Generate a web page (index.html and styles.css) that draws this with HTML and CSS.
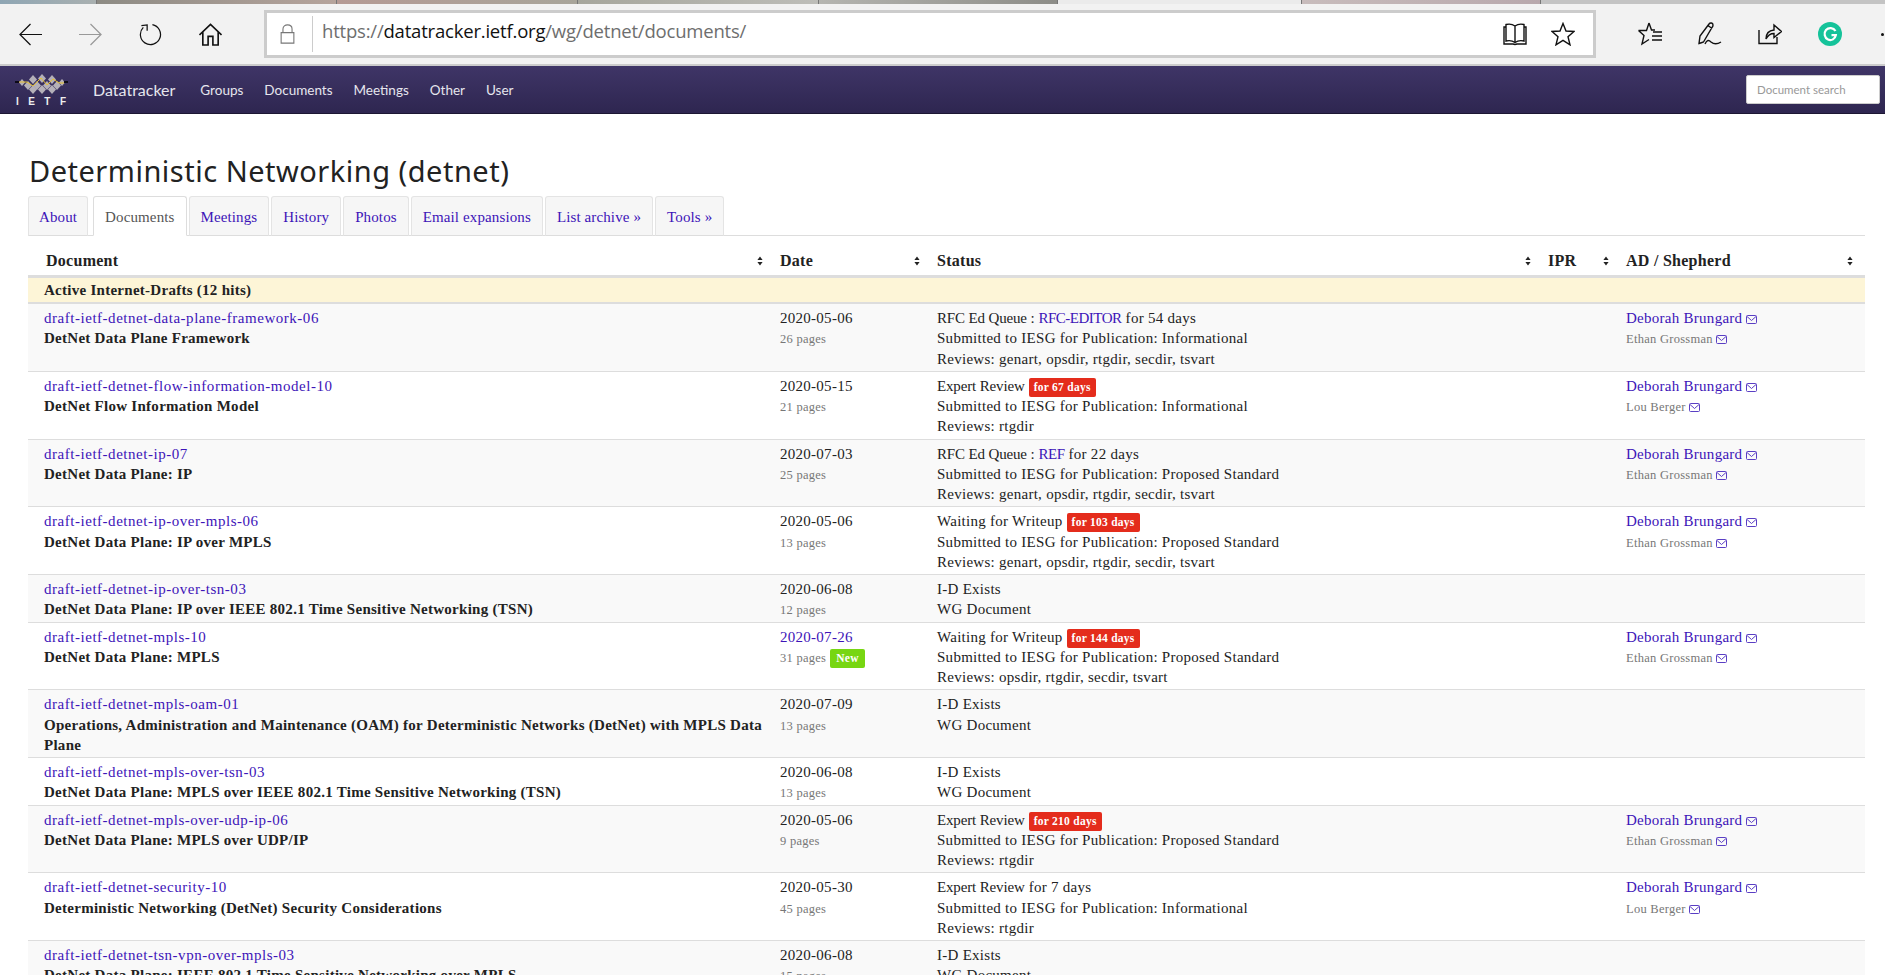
FILE: index.html
```html
<!DOCTYPE html>
<html lang="en">
<head>
<meta charset="utf-8">
<title>Deterministic Networking (detnet)</title>
<link rel="stylesheet" href="styles.css">
</head>
<body>
<svg class="defs" width="0" height="0" aria-hidden="true">
  <symbol id="sort" viewBox="0 0 6 10"><path d="M3 0.5 L5.6 4 H0.4 Z M3 9.5 L5.6 6 H0.4 Z"/></symbol>
  <symbol id="mail" viewBox="0 0 11 9"><rect x="0.5" y="0.5" width="10" height="8" rx="1" fill="none" stroke="currentColor"/><path d="M1 1.5 L5.5 5.5 L10 1.5" fill="none" stroke="currentColor"/></symbol>
</svg>
<div class="photo-strip">
  <span class="strip s1"></span><span class="strip s2"></span><span class="strip s3"></span><span class="strip s4"></span><span class="strip s5"></span><span class="strip s6"></span><span class="strip s7"></span><span class="strip s8"></span>
</div>
<header class="toolbar">
  <div class="tool-left">
    <svg class="tool-icon" viewBox="0 0 24 24"><path d="M1 12 H24 M12 1 L1 12 L12 23" /></svg>
    <svg class="tool-icon off" viewBox="0 0 24 24"><path d="M0 12 H23 M12 1 L23 12 L12 23" /></svg>
    <svg class="tool-icon" viewBox="0 0 24 24"><path d="M14 1.700 A10.500 10.500 0 1 1 4.500 4.600 M2.500 2.700 L8.500 2 V8" /></svg>
    <svg class="tool-icon home" viewBox="0 0 24 24"><path d="M0.500 12.500 L12 1.500 L23.500 12.500 M4 9.500 V23 H9.500 V14 H14.500 V23 H20 V9.500" /></svg>
  </div>
  <div class="address">
    <svg class="lock" viewBox="0 0 16 22"><path d="M1 9.500 H15 V21 H1 Z M3 9.500 V5.500 C3 -0.500 13 -0.500 13 5.500 V9.500" /></svg>
    <span class="addr-sep"></span>
    <span class="url">https://<b>datatracker.ietf.org</b>/wg/detnet/documents/</span>
    <span class="addr-right">
      <svg class="tool-icon book" viewBox="0 0 24 22"><path d="M12 3 C9 0.800 6 0.800 3 1.500 V18 C6 17.300 9 17.300 12 19.500 C15 17.300 18 17.300 21 18 V1.500 C18 0.800 15 0.800 12 3 Z M12 3 V19.500 M3 4 H1 V21 H10 L12 21.500 L14 21 H23 V4 H21" /></svg>
      <svg class="tool-icon star" viewBox="0 0 24 24"><path d="M12 1.500 L15 9 L23 9.500 L17 14.700 L19 22.800 L12 18.300 L5 22.800 L7 14.700 L1 9.500 L9 9 Z" /></svg>
    </span>
  </div>
  <div class="tool-right">
    <svg class="tool-icon" viewBox="0 0 24 24"><path d="M11 1 L13.500 8 H17 M0.500 8.500 H8.500 L11 1 M0.500 8.500 L6 13.500 L4 22 L11 17.500 M15 10 H24 M14 14 H24 M14 18 H24" /></svg>
    <svg class="tool-icon" viewBox="0 0 24 24"><path d="M1 21.500 L2 14 L11 2 C12 0.500 15 0.500 15 3 C15 4 14.500 5 14 5.500 L5.500 20 Z M10 3.500 L14 6.500 M1 21.500 L5.500 20 M7 22 C9 17.500 11 18 13 20 C16 22.500 19 22.500 23 20" /></svg>
    <svg class="tool-icon" viewBox="0 0 24 24"><path d="M1 8 V21.500 H19 V15 M8 17 C8 11 11 8.500 16 8 V3 L23.500 9.500 L16 15.500 V11.500 C12.500 11.500 10 13 8 17 Z" /></svg>
    <svg class="grammarly" viewBox="0 0 24 24"><circle cx="12" cy="12" r="12" fill="#15c39a"/><path d="M17.500 9 C15.500 5.500 10.500 5.300 8 8 C5.500 11 6.500 16 10 17.500 C13.500 19 17 17 17.800 13.200 H13.500" fill="none" stroke="#fff" stroke-width="2.200"/></svg>
    <span class="more-dot"></span>
  </div>
</header>
<nav class="navbar">
  <a class="brand-logo" href="#">
    <svg class="logo-mark" viewBox="0 0 54 21">
      <g fill="#b4b0b8">
        <path d="M19 2 L23 6.500 L19 11 L15 6.500 Z"/><path d="M28 1 L32 5.500 L28 10 L24 5.500 Z"/><path d="M38 2 L42 6.500 L38 11 L34 6.500 Z"/>
        <path d="M14 8 L18 12.500 L14 17 L10 12.500 Z"/><path d="M23 8 L27 12.500 L23 17 L19 12.500 Z"/><path d="M33 8 L37 12.500 L33 17 L29 12.500 Z"/><path d="M43 8 L47 12.500 L43 17 L39 12.500 Z"/>
        <path d="M19 12 L23 16.500 L19 21 L15 16.500 Z"/><path d="M28 12 L32 16.500 L28 21 L24 16.500 Z"/><path d="M38 12 L42 16.500 L38 21 L34 16.500 Z"/>
        <path d="M8 6 L11 9.500 L8 13 L5 9.500 Z"/><path d="M48 6 L51 9.500 L48 13 L45 9.500 Z"/>
      </g>
      <path d="M5 9 H13 L19 13 L27 5 L33 12 L39 6 L45 10 H50" fill="none" stroke="#e6c02e" stroke-width="1"/>
      <path d="M1 9 H5 M50 9 H54" fill="none" stroke="#0d0a18" stroke-width="2"/>
    </svg>
    <span class="logo-text">IETF</span>
  </a>
  <a class="brand" href="#">Datatracker</a>
  <ul class="nav-links">
    <li><a href="#">Groups</a></li>
    <li><a href="#">Documents</a></li>
    <li><a href="#">Meetings</a></li>
    <li><a href="#">Other</a></li>
    <li><a href="#">User</a></li>
  </ul>
  <input class="doc-search" type="text" placeholder="Document search">
</nav>
<main class="page">
  <h1 class="title">Deterministic Networking (detnet)</h1>
  <ul class="tabs">
    <li><a href="#">About</a></li>
    <li class="active"><a href="#">Documents</a></li>
    <li><a href="#">Meetings</a></li>
    <li><a href="#">History</a></li>
    <li><a href="#">Photos</a></li>
    <li><a href="#">Email expansions</a></li>
    <li><a href="#">List archive »</a></li>
    <li><a href="#">Tools »</a></li>
  </ul>
  <table class="docs">
    <colgroup><col class="c-doc"><col class="c-date"><col class="c-status"><col class="c-ipr"><col class="c-ad"></colgroup>
    <thead>
      <tr>
        <th class="first"><div class="th-in">Document<svg class="sort"><use href="#sort"/></svg></div></th>
        <th><div class="th-in">Date<svg class="sort"><use href="#sort"/></svg></div></th>
        <th><div class="th-in">Status<svg class="sort"><use href="#sort"/></svg></div></th>
        <th><div class="th-in">IPR<svg class="sort"><use href="#sort"/></svg></div></th>
        <th><div class="th-in">AD / Shepherd<svg class="sort"><use href="#sort"/></svg></div></th>
      </tr>
    </thead>
    <tbody>
      <tr class="group"><th colspan="5" class="first">Active Internet-Drafts (12 hits)</th></tr>
      <tr>
        <td class="first"><a href="#">draft-ietf-detnet-data-plane-framework-06</a><br><b>DetNet Data Plane Framework</b></td>
        <td>2020-05-06<br><small>26 pages</small></td>
        <td><span class="tight">RFC Ed Queue :</span> <a class="caps" href="#">RFC-EDITOR</a> for 54 days<br>Submitted to IESG for Publication: Informational<br>Reviews: genart, opsdir, rtgdir, secdir, tsvart</td>
        <td></td>
        <td><a href="#">Deborah Brungard</a> <a href="#"><svg class="mail"><use href="#mail"/></svg></a><br><small>Ethan Grossman <a href="#"><svg class="mail"><use href="#mail"/></svg></a></small></td>
      </tr>
      <tr>
        <td class="first"><a href="#">draft-ietf-detnet-flow-information-model-10</a><br><b>DetNet Flow Information Model</b></td>
        <td>2020-05-15<br><small>21 pages</small></td>
        <td><span class="tight">Expert Review</span> <span class="badge red">for 67 days</span><br>Submitted to IESG for Publication: Informational<br>Reviews: rtgdir</td>
        <td></td>
        <td><a href="#">Deborah Brungard</a> <a href="#"><svg class="mail"><use href="#mail"/></svg></a><br><small>Lou Berger <a href="#"><svg class="mail"><use href="#mail"/></svg></a></small></td>
      </tr>
      <tr>
        <td class="first"><a href="#">draft-ietf-detnet-ip-07</a><br><b>DetNet Data Plane: IP</b></td>
        <td>2020-07-03<br><small>25 pages</small></td>
        <td><span class="tight">RFC Ed Queue :</span> <a class="caps" href="#">REF</a> for 22 days<br>Submitted to IESG for Publication: Proposed Standard<br>Reviews: genart, opsdir, rtgdir, secdir, tsvart</td>
        <td></td>
        <td><a href="#">Deborah Brungard</a> <a href="#"><svg class="mail"><use href="#mail"/></svg></a><br><small>Ethan Grossman <a href="#"><svg class="mail"><use href="#mail"/></svg></a></small></td>
      </tr>
      <tr>
        <td class="first"><a href="#">draft-ietf-detnet-ip-over-mpls-06</a><br><b>DetNet Data Plane: IP over MPLS</b></td>
        <td>2020-05-06<br><small>13 pages</small></td>
        <td>Waiting for Writeup <span class="badge red">for 103 days</span><br>Submitted to IESG for Publication: Proposed Standard<br>Reviews: genart, opsdir, rtgdir, secdir, tsvart</td>
        <td></td>
        <td><a href="#">Deborah Brungard</a> <a href="#"><svg class="mail"><use href="#mail"/></svg></a><br><small>Ethan Grossman <a href="#"><svg class="mail"><use href="#mail"/></svg></a></small></td>
      </tr>
      <tr>
        <td class="first"><a href="#">draft-ietf-detnet-ip-over-tsn-03</a><br><b>DetNet Data Plane: IP over IEEE 802.1 Time Sensitive Networking (TSN)</b></td>
        <td>2020-06-08<br><small>12 pages</small></td>
        <td>I-D Exists<br>WG Document</td>
        <td></td>
        <td></td>
      </tr>
      <tr>
        <td class="first"><a href="#">draft-ietf-detnet-mpls-10</a><br><b>DetNet Data Plane: MPLS</b></td>
        <td><a href="#">2020-07-26</a><br><small>31 pages</small> <span class="badge green">New</span></td>
        <td>Waiting for Writeup <span class="badge red">for 144 days</span><br>Submitted to IESG for Publication: Proposed Standard<br>Reviews: opsdir, rtgdir, secdir, tsvart</td>
        <td></td>
        <td><a href="#">Deborah Brungard</a> <a href="#"><svg class="mail"><use href="#mail"/></svg></a><br><small>Ethan Grossman <a href="#"><svg class="mail"><use href="#mail"/></svg></a></small></td>
      </tr>
      <tr>
        <td class="first"><a href="#">draft-ietf-detnet-mpls-oam-01</a><br><b>Operations, Administration and Maintenance (OAM) for Deterministic Networks (DetNet) with MPLS Data Plane</b></td>
        <td>2020-07-09<br><small>13 pages</small></td>
        <td>I-D Exists<br>WG Document</td>
        <td></td>
        <td></td>
      </tr>
      <tr>
        <td class="first"><a href="#">draft-ietf-detnet-mpls-over-tsn-03</a><br><b>DetNet Data Plane: MPLS over IEEE 802.1 Time Sensitive Networking (TSN)</b></td>
        <td>2020-06-08<br><small>13 pages</small></td>
        <td>I-D Exists<br>WG Document</td>
        <td></td>
        <td></td>
      </tr>
      <tr>
        <td class="first"><a href="#">draft-ietf-detnet-mpls-over-udp-ip-06</a><br><b>DetNet Data Plane: MPLS over UDP/IP</b></td>
        <td>2020-05-06<br><small>9 pages</small></td>
        <td><span class="tight">Expert Review</span> <span class="badge red">for 210 days</span><br>Submitted to IESG for Publication: Proposed Standard<br>Reviews: rtgdir</td>
        <td></td>
        <td><a href="#">Deborah Brungard</a> <a href="#"><svg class="mail"><use href="#mail"/></svg></a><br><small>Ethan Grossman <a href="#"><svg class="mail"><use href="#mail"/></svg></a></small></td>
      </tr>
      <tr>
        <td class="first"><a href="#">draft-ietf-detnet-security-10</a><br><b>Deterministic Networking (DetNet) Security Considerations</b></td>
        <td>2020-05-30<br><small>45 pages</small></td>
        <td><span class="tight">Expert Review</span> for 7 days<br>Submitted to IESG for Publication: Informational<br>Reviews: rtgdir</td>
        <td></td>
        <td><a href="#">Deborah Brungard</a> <a href="#"><svg class="mail"><use href="#mail"/></svg></a><br><small>Lou Berger <a href="#"><svg class="mail"><use href="#mail"/></svg></a></small></td>
      </tr>
      <tr>
        <td class="first"><a href="#">draft-ietf-detnet-tsn-vpn-over-mpls-03</a><br><b>DetNet Data Plane: IEEE 802.1 Time Sensitive Networking over MPLS</b></td>
        <td>2020-06-08<br><small>15 pages</small></td>
        <td>I-D Exists<br>WG Document</td>
        <td></td>
        <td></td>
      </tr>
    </tbody>
  </table>
</main>
</body>
</html>
```
FILE: styles.css
```css
* { box-sizing: border-box; }
html, body { margin: 0; height: 975px; overflow: hidden; background: #fff; }
body { font-family: "Liberation Serif", serif; font-size: 15px; color: #222; letter-spacing: 0.27px; }
a { color: #3d14b8; text-decoration: none; }
.defs { position: absolute; }

.photo-strip { display: flex; height: 4px; }
.strip { border-right: 1px solid #777; }
.s1 { width: 97px; background: linear-gradient(90deg, #8fa6b4, #a9b0b0); }
.s2 { width: 240px; background: linear-gradient(90deg, #8d8b84, #b6a49c); }
.s3 { width: 241px; background: linear-gradient(90deg, #b59a94, #a8a59a); }
.s4 { width: 241px; background: linear-gradient(90deg, #a6a69c, #bdbdb8); }
.s5 { width: 239px; background: linear-gradient(90deg, #b5b5b0, #8d8d88); }
.s6 { width: 244px; background: #ebebeb; }
.s7 { width: 239px; background: linear-gradient(90deg, #c8bcbc, #b8a8ac); }
.s8 { flex: 1; background: #c4c4c4; border-right: 0; }

.toolbar { display: flex; align-items: center; height: 62px; background: #f2f2f2; border-bottom: 2px solid #ccc; padding: 0 0 0 19px; }
.tool-left { display: flex; gap: 37px; width: 245px; flex: none; }
.tool-icon { width: 24px; height: 24px; fill: none; stroke: #111; stroke-width: 1.4; flex: none; }
.tool-left .tool-icon { width: 23px; height: 23px; stroke-width: 1.3; }
.tool-left .home { stroke-width: 1.7; }
.tool-icon.off { stroke: #999; }
.address { display: flex; align-items: center; flex: none; width: 1332px; height: 48px; border: 3px solid #ccc; background: #fff; padding-left: 13px; }
.lock { width: 15px; height: 20px; fill: none; stroke: #777; stroke-width: 1.2; flex: none; }
.addr-sep { width: 1px; height: 36px; background: #ccc; margin: 0 9px 0 17px; flex: none; }
.url { font-family: "Open Sans", sans-serif; font-size: 18.500px; color: #6e6e6e; letter-spacing: -0.2px; margin-top: -7px; }
.url b { font-weight: 400; color: #111; }
.addr-right { display: flex; margin-left: auto; gap: 24px; padding-right: 18px; }
.tool-right { display: flex; align-items: center; gap: 36px; padding-left: 42px; flex: 1; min-width: 0; }
.grammarly { width: 24px; height: 24px; flex: none; }
.more-dot { width: 3px; height: 3px; border-radius: 50%; background: #111; flex: none; margin-left: 3px; }

.navbar { display: flex; align-items: center; height: 48px; padding: 1px 5px 0 14px; background: linear-gradient(#3f3567, #2e2650); border-bottom: 1px solid #1c1733; letter-spacing: 0; }
.brand-logo { display: flex; flex-direction: column; align-items: center; width: 54px; margin-right: 25px; }
.logo-mark { width: 54px; height: 21px; }
.logo-text { font: 700 10px/1 "Liberation Sans", sans-serif; letter-spacing: 9.500px; color: #eee; margin-top: 3px; margin-right: -9.500px; }
.brand { font-family: "Lato", sans-serif; font-size: 16px; color: #e6e6ee; margin: -2px 25px 0 0; }
.nav-links { display: flex; gap: 21px; list-style: none; margin: 0; padding: 0; flex: 1; }
.nav-links a { font-family: "Lato", sans-serif; font-size: 13.500px; color: #e6e6ee; }
.doc-search { width: 134px; height: 29px; margin-top: -1px; border: 1px solid #ccc; border-radius: 2px; background: #fff; padding: 0 10px; font-family: "Lato", sans-serif; font-size: 11.500px; }
.doc-search::placeholder { color: #999; opacity: 1; }

.page { padding: 0 20px 0 28px; }
.title { font-family: "Noto Sans", sans-serif; font-weight: 400; font-size: 29px; line-height: 36px; color: #222; margin: 39px 0 0 1px; letter-spacing: 0.5px; height: 43px; white-space: nowrap; }
.tabs { display: flex; gap: 2px; list-style: none; margin: 0; padding: 0; height: 40px; border-bottom: 1px solid #ddd; letter-spacing: 0.12px; }
.tabs li { height: 40px; border: 1px solid #e4e4e4; border-bottom-color: #ddd; border-radius: 3px 3px 0 0; background: #f6f6f6; }
.tabs li:first-child { margin-right: 3px; }
.tabs li:first-child a { padding: 0 10px; }
.tabs a { display: block; padding: 0 11px; line-height: 40px; }
.tabs .active { background: #fff; border-color: #ddd; border-bottom-color: #fff; }
.tabs .active a { color: #555; }

.docs { width: 100%; table-layout: fixed; border-collapse: collapse; line-height: 20.250px; }
.c-doc { width: 747px; }
.c-date { width: 157px; }
.c-status { width: 611px; }
.c-ipr { width: 78px; }
.docs th { text-align: left; padding: 0 12px 0 5px; font-weight: 700; }
.docs thead th { height: 40px; border-bottom: 3px solid #ddd; vertical-align: bottom; padding-bottom: 3px; font-size: 16px; }
.docs thead .first { padding-left: 18px; }
.th-in { display: flex; justify-content: space-between; align-items: center; }
.sort { width: 6px; height: 10px; fill: #222; flex: none; }
.docs .first { padding-left: 16px; }
.docs .group th { height: 27px; background: #fdf5d7; border-bottom: 2px solid #ddd; }
.docs td { vertical-align: top; padding: 4px 5px 2px 5px; border-bottom: 1px solid #ddd; }
.docs td.first a { letter-spacing: 0.53px; }
.docs tbody tr:nth-child(even) td { background: #f9f9f9; }
.docs small { font-size: 12.500px; line-height: 1; color: #777; }
.tight { letter-spacing: -0.15px; }
.caps { letter-spacing: -0.5px; }
.mail { width: 11px; height: 9px; color: #5a3fc4; vertical-align: -1px; }
.badge { display: inline-block; position: relative; top: 2px; height: 19px; padding: 0 5px; border-radius: 2px; color: #fff; font-size: 11.500px; font-weight: 700; line-height: 19px; vertical-align: top; }
.red { background: #e42c1c; }
.green { background: #77d612; padding: 0 6px; }
```
